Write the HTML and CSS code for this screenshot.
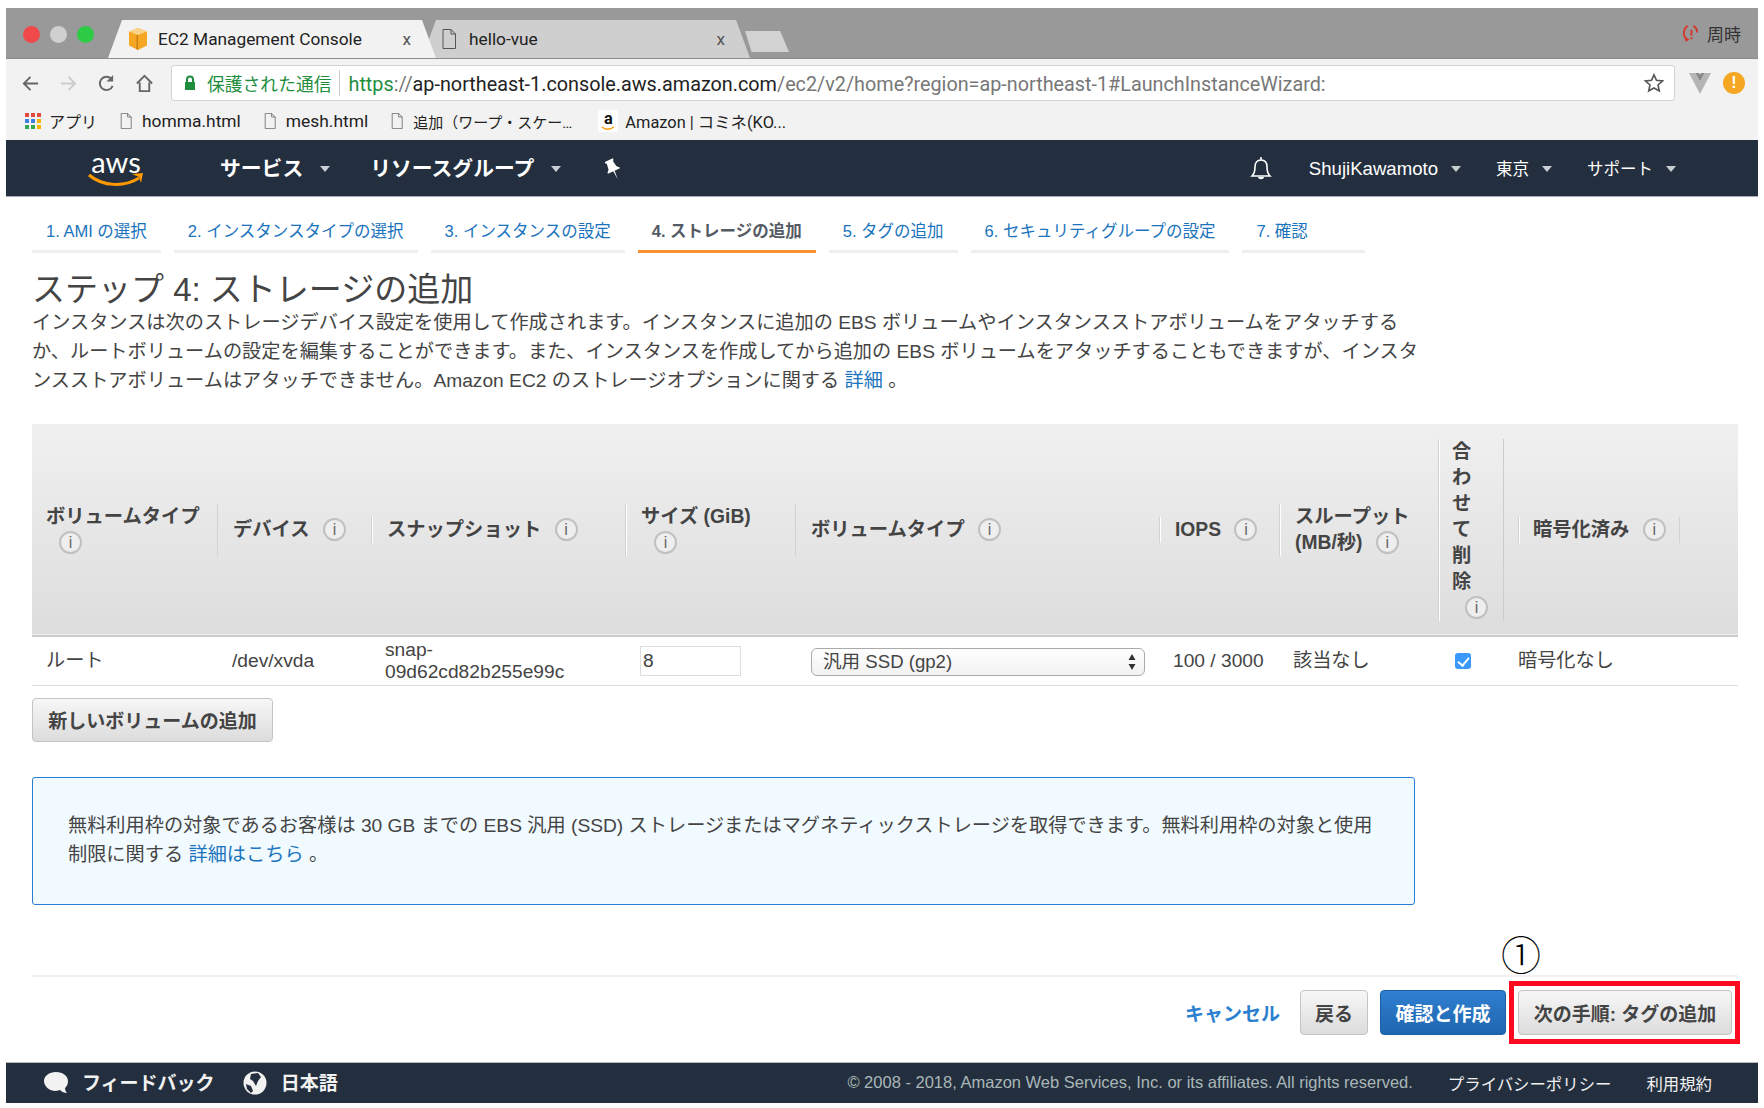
FILE: index.html
```html
<!DOCTYPE html>
<html lang="ja">

<head>
    <meta charset="UTF-8">
    <title>EC2 Management Console</title>
    <link rel="stylesheet" href="styles.css">
</head>

<body>
    <div class="screen">

        <div class="tabstrip">
            <div class="lights">
                <span class="light red"></span>
                <span class="light grey"></span>
                <span class="light green"></span>
            </div>
            <div class="tab active">
                <svg class="favicon" viewBox="0 0 20 22"><path fill="#f5a623" d="M10 0l9 3.5v14L10 22 1 17.500v-14z"/><path fill="#c77f12" d="M10 7v15l-1.500-.6V7z"/><path fill="#fbd38a" d="M10 0l9 3.500-9 3.500-9-3.500z"/></svg>
                <span class="tab-title">EC2 Management Console</span>
                <span class="tab-close">x</span>
            </div>
            <div class="tab other">
                <svg class="file-icon big" viewBox="0 0 14 20"><path fill="none" stroke="#555" d="M1 .5h8l4.500 4.500v14.500H1zM9 .5v4.500h4.500"/></svg>
                <span class="tab-title">hello-vue</span>
                <span class="tab-close">x</span>
            </div>
            <div class="newtab"></div>
            <div class="tab-user">
                <svg class="sync" viewBox="0 0 18 20"><path fill="none" stroke="#d8352a" stroke-width="2" d="M6 2C2 4 1 10 3 14l3 3M12 2c2 1 4 3 4 7"/><path fill="#d8352a" d="M9 6h2v6H9zM9 14h2v2H9zM4 19l-1-5 5 2z"/></svg>
                <span>周時</span>
            </div>
        </div>

        <div class="toolbar">
            <svg class="tool-icon first" viewBox="0 0 20 20"><path fill="none" stroke="#666" stroke-width="2" d="M18 10H3M10 3l-7 7 7 7"/></svg>
            <svg class="tool-icon" viewBox="0 0 20 20"><path fill="none" stroke="#ccc" stroke-width="2" d="M2 10h15M10 3l7 7-7 7"/></svg>
            <svg class="tool-icon" viewBox="0 0 20 20"><path fill="none" stroke="#666" stroke-width="2" d="M16.500 12.500A7 7 0 1 1 15 5"/><path fill="#666" d="M17 1v7h-7z"/></svg>
            <svg class="tool-icon" viewBox="0 0 20 20"><path fill="none" stroke="#666" stroke-width="2" d="M2 10l8-8 8 8M5 9v9h10V9"/></svg>
            <div class="address">
                <svg class="lock" viewBox="0 0 12 16"><path fill="#1e8e3e" d="M1 7h10v8H1z"/><path fill="none" stroke="#1e8e3e" stroke-width="2" d="M3 7V4.500a3 3 0 0 1 6 0V7"/></svg>
                <span class="secure">保護された通信</span>
                <span class="url"><span class="https">https</span><span class="dim">://</span>ap-northeast-1.console.aws.amazon.com<span class="dim">/ec2/v2/home?region=ap-northeast-1#LaunchInstanceWizard:</span></span>
                <svg class="star" viewBox="0 0 20 20"><path fill="none" stroke="#555" stroke-width="1.600" d="M10 1.800l2.500 5.500 6 .7-4.500 4 1.300 6L10 15l-5.300 3 1.300-6-4.500-4 6-.7z"/></svg>
            </div>
            <svg class="vue" viewBox="0 0 24 24"><path fill="#b5b5b5" d="M0 1h7l5 9 5-9h7L12 24z"/><path fill="#888" d="M7 1h4l1 2 1-2h4l-5 9z"/></svg>
            <div class="warn">!</div>
        </div>

        <div class="bookmarks">
            <div class="bm apps">
                <svg class="apps-icon" viewBox="0 0 17 17"><path fill="#e04a3f" d="M0 0h4v4H0zM6 0h4v4H6zM12 0h4v4h-4z"/><path fill="#3f7fe0" d="M0 6h4v4H0zM6 6h4v4H6z"/><path fill="#f4b400" d="M12 6h4v4h-4zM12 12h4v4h-4z"/><path fill="#34a853" d="M0 12h4v4H0zM6 12h4v4H6z"/></svg>
                アプリ
            </div>
            <div class="bm">
                <svg class="file-icon" viewBox="0 0 14 20"><path fill="none" stroke="#666" d="M1 .5h8l4.500 4.500v14.500H1zM9 .5v4.500h4.500"/></svg>
                homma.html
            </div>
            <div class="bm">
                <svg class="file-icon" viewBox="0 0 14 20"><path fill="none" stroke="#666" d="M1 .5h8l4.500 4.500v14.500H1zM9 .5v4.500h4.500"/></svg>
                mesh.html
            </div>
            <div class="bm">
                <svg class="file-icon" viewBox="0 0 14 20"><path fill="none" stroke="#666" d="M1 .5h8l4.500 4.500v14.500H1zM9 .5v4.500h4.500"/></svg>
                <span class="bm-long">追加（ワープ・スケー…</span>
            </div>
            <div class="bm amazon">
                <span class="amazon-icon">a<svg viewBox="0 0 14 5"><path fill="none" stroke="#f90" stroke-width="1.500" d="M1 1c3 3 8 3 12 0"/></svg></span>
                Amazon | コミネ(KO...
            </div>
        </div>

        <nav class="topnav">
            <div class="aws-logo">
                <span>aws</span>
                <svg viewBox="0 0 56 14"><path fill="none" stroke="#f90" stroke-width="3" d="M1 2c14 12 36 12 50 3"/><path fill="#f90" d="M44 1l11-1-2 10-2-6z"/></svg>
            </div>
            <a class="nav-main first">サービス<i class="caret"></i></a>
            <a class="nav-main">リソースグループ<i class="caret"></i></a>
            <svg class="pin" viewBox="0 0 18 20"><g transform="rotate(-25 9 10)"><path fill="#fff" d="M5 1h8v2h-1l1 6 2 2v1H3v-1l2-2 1-6H5zM8.300 12h1.400l-.7 8z"/></g></svg>
            <svg class="bell" viewBox="0 0 22 26"><path fill="none" stroke="#fff" stroke-width="1.600" d="M2 20c2-2 3-4 3-9 0-4 2-7 6-7s6 3 6 7c0 5 1 7 3 9zM11 1v3"/><path fill="#fff" d="M8 21h6c0 3-6 3-6 0z"/></svg>
            <a class="nav-side user">ShujiKawamoto<i class="caret"></i></a>
            <a class="nav-side">東京<i class="caret"></i></a>
            <a class="nav-side">サポート<i class="caret"></i></a>
        </nav>

        <ul class="steps">
            <li>1. AMI の選択</li>
            <li>2. インスタンスタイプの選択</li>
            <li>3. インスタンスの設定</li>
            <li class="current">4. ストレージの追加</li>
            <li>5. タグの追加</li>
            <li>6. セキュリティグループの設定</li>
            <li class="last">7. 確認</li>
        </ul>

        <main class="content">
            <h1>ステップ 4: ストレージの追加</h1>
            <p class="intro">インスタンスは次のストレージデバイス設定を使用して作成されます。インスタンスに追加の EBS ボリュームやインスタンスストアボリュームをアタッチする<br>か、ルートボリュームの設定を編集することができます。また、インスタンスを作成してから追加の EBS ボリュームをアタッチすることもできますが、インスタ<br>ンスストアボリュームはアタッチできません。Amazon EC2 のストレージオプションに関する <a href="#">詳細</a> 。</p>

            <table class="volumes">
                <colgroup>
                    <col class="c1"><col class="c2"><col class="c3"><col class="c4"><col class="c5"><col class="c6"><col class="c7"><col class="c8"><col class="c9">
                </colgroup>
                <thead>
                    <tr>
                        <th><div class="th-in first-col">ボリュームタイプ<br><span class="info wrapped">i</span></div></th>
                        <th><div class="th-in no-sep">デバイス <span class="info">i</span></div></th>
                        <th><div class="th-in">スナップショット <span class="info">i</span></div></th>
                        <th><div class="th-in sep-r">サイズ (GiB)<br><span class="info wrapped">i</span></div></th>
                        <th><div class="th-in no-sep">ボリュームタイプ <span class="info">i</span></div></th>
                        <th><div class="th-in">IOPS <span class="info">i</span></div></th>
                        <th><div class="th-in">スループット<br>(MB/秒) <span class="info">i</span></div></th>
                        <th><div class="th-in narrow"><div class="tate">合わせて削除<br><span class="info wrapped">i</span></div></div></th>
                        <th><div class="th-in enc">暗号化済み <span class="info">i</span></div></th>
                    </tr>
                </thead>
                <tbody>
                    <tr>
                        <td class="jp">ルート</td>
                        <td>/dev/xvda</td>
                        <td class="snap">snap-<br>09d62cd82b255e99c</td>
                        <td><input class="size" type="text" value="8"></td>
                        <td>
                            <div class="select">
                                <span>汎用 SSD (gp2)</span>
                                <svg viewBox="0 0 8 16"><path fill="#333" d="M4 0l3.500 6h-7zM4 16l3.500-6h-7z"/></svg>
                            </div>
                        </td>
                        <td>100 / 3000</td>
                        <td class="jp">該当なし</td>
                        <td class="check"><input type="checkbox" checked></td>
                        <td class="jp">暗号化なし</td>
                    </tr>
                </tbody>
            </table>

            <button class="btn add">新しいボリュームの追加</button>

            <div class="notice">
                無料利用枠の対象であるお客様は 30 GB までの EBS 汎用 (SSD) ストレージまたはマグネティックストレージを取得できます。無料利用枠の対象と使用<br>制限に関する <a href="#">詳細はこちら</a> 。
            </div>

            <div class="actions">
                <span class="marker">①</span>
                <a class="cancel" href="#">キャンセル</a>
                <button class="btn back">戻る</button>
                <button class="btn primary">確認と作成</button>
                <button class="btn next">次の手順: タグの追加</button>
                <div class="redbox"></div>
            </div>
        </main>

        <footer class="footer">
            <svg class="bubble" viewBox="0 0 26 24"><path fill="#f2f2f2" d="M13 1c7 0 12 4 12 9 0 3-1 5-3 7 0 2 1 4 2 5-3 0-5-1-7-3-1 0-3 1-4 1C6 20 1 15 1 10s5-9 12-9z"/></svg>
            <span class="fb">フィードバック</span>
            <svg class="globe" viewBox="0 0 24 24"><circle cx="12" cy="12" r="11.500" fill="#f2f2f2"/><path fill="#232f3e" d="M8 3l7-1 3 4-3 4-2 5-3-5-3-2zM3 13l5 2 2 5-2 2-4-4z"/></svg>
            <span class="lang">日本語</span>
            <span class="copy">© 2008 - 2018, Amazon Web Services, Inc. or its affiliates. All rights reserved.</span>
            <a class="foot-link">プライバシーポリシー</a>
            <a class="foot-link terms">利用規約</a>
        </footer>
    </div>
</body>

</html>
```

FILE: styles.css
```css
* {
    box-sizing: border-box;
}

body {
    margin: 0;
    background-color: #fff;
    color: #444;
    font-family: "Liberation Sans", "Noto Sans CJK JP", sans-serif;
    font-size: 19.200px;
}

a {
    color: #1a73bd;
    text-decoration: none;
}

.screen {
    width: 1752px;
    margin: 8px 0 0 6px;
}

/* browser chrome */

.tabstrip {
    height: 51px;
    background-color: #999;
    display: flex;
    align-items: flex-end;
    border-bottom: 1px solid #8c8c8c;
}

.lights {
    align-self: flex-start;
    display: flex;
    gap: 10px;
    margin: 18px 14px 0 17px;
}

.light {
    width: 17px;
    height: 17px;
    border-radius: 50%;
}

.red { background-color: #f0494a; }
.grey { background-color: #d0d0d0; }
.green { background-color: #2ecb47; }

.tab {
    position: relative;
    width: 328px;
    height: 38px;
    display: flex;
    align-items: center;
    font-family: Roboto, "Noto Sans CJK JP", sans-serif;
    font-size: 17.300px;
    color: #222;
    clip-path: polygon(0 100%, 14px 0, calc(100% - 14px) 0, 100% 100%);
}

.tab.active {
    background-color: #f2f2f2;
    padding-left: 20px;
    z-index: 1;
}

.tab.other {
    background-color: #cfcfcf;
    margin-left: -14px;
    padding-left: 20px;
}

.favicon {
    width: 20px;
    height: 22px;
    margin-right: 10px;
}

.tab-close {
    position: absolute;
    right: 25px;
    color: #555;
}

.file-icon {
    width: 12px;
    height: 16px;
    flex-shrink: 0;
}

.file-icon.big {
    width: 14px;
    height: 20px;
    margin-right: 13px;
}

.newtab {
    width: 44px;
    height: 21px;
    margin: 0 0 6px -5px;
    background-color: #d2d2d2;
    clip-path: polygon(0 0, 80% 0, 100% 100%, 15% 100%);
}

.tab-user {
    margin-left: auto;
    align-self: center;
    display: flex;
    align-items: center;
    gap: 8px;
    padding-right: 17px;
    font-size: 17px;
    color: #333;
}

.sync {
    width: 17px;
    height: 19px;
}

.toolbar {
    height: 48px;
    background-color: #f2f2f2;
    display: flex;
    align-items: center;
}

.tool-icon {
    width: 19px;
    height: 19px;
    margin-right: 19px;
}

.tool-icon.first {
    margin-left: 15px;
}

.address {
    width: 1504px;
    height: 36px;
    margin-left: -2px;
    background-color: #fff;
    border: 1px solid #d4d4d4;
    border-radius: 3px;
    display: flex;
    align-items: center;
    padding-left: 12px;
    font-family: Roboto, "Noto Sans CJK JP", sans-serif;
    font-size: 19.800px;
    color: #222;
    white-space: nowrap;
}

.lock {
    width: 12px;
    height: 16px;
    margin-right: 11px;
}

.secure {
    color: #1e8e3e;
    font-size: 17.800px;
    padding-right: 8px;
    margin-right: 8px;
    border-right: 1px solid #ccc;
}

.url {
    margin-top: 2px;
}

.https { color: #1e8e3e; }
.dim { color: #777; }

.star {
    width: 20px;
    height: 20px;
    margin-left: auto;
    margin-right: 10px;
}

.vue {
    width: 22px;
    height: 22px;
    margin-left: 14px;
}

.warn {
    width: 22px;
    height: 22px;
    margin-left: 12px;
    border-radius: 50%;
    background-color: #f5a623;
    color: #fff;
    font-weight: bold;
    font-size: 16px;
    line-height: 22px;
    text-align: center;
}

.bookmarks {
    height: 33px;
    background-color: #f2f2f2;
    display: flex;
    align-items: flex-start;
    padding-left: 19px;
    font-family: Roboto, "Noto Sans CJK JP", sans-serif;
    font-size: 17.400px;
    color: #222;
}

.bm {
    display: flex;
    align-items: center;
    gap: 10px;
    height: 28px;
    margin-right: 23px;
    white-space: nowrap;
}

.bm.apps {
    gap: 7px;
    font-size: 16px;
}

.apps-icon {
    width: 17px;
    height: 17px;
}

.bm-long {
    font-size: 15px;
}

.bm.amazon {
    gap: 7px;
    margin-left: 3px;
    font-size: 16.400px;
}

.amazon-icon {
    position: relative;
    width: 20px;
    height: 22px;
    background-color: #fff;
    border-radius: 3px;
    text-align: center;
    font-weight: bold;
    line-height: 17px;
    color: #111;
}

.amazon-icon svg {
    position: absolute;
    left: 3px;
    bottom: 1px;
    width: 14px;
    height: 5px;
}

/* aws header */

.topnav {
    height: 57px;
    padding: 2px 82px 0 0;
    background-color: #232f3e;
    border-bottom: 1px solid #aab;
    display: flex;
    align-items: center;
    color: #fff;
}

.aws-logo {
    width: 56px;
    margin-left: 82px;
    display: flex;
    flex-direction: column;
    align-items: center;
    color: #fff;
    font-family: Lato, sans-serif;
    font-size: 29px;
    line-height: 22px;
}

.aws-logo svg {
    width: 56px;
    height: 14px;
}

.nav-main,
.nav-side {
    color: #fff;
    display: flex;
    align-items: center;
    white-space: nowrap;
    line-height: 26px;
}

.nav-main {
    font-size: 20.800px;
    font-weight: bold;
    margin-right: 40px;
}

.nav-main.first {
    margin-left: 76px;
}

.nav-side {
    font-size: 16.500px;
    margin-right: 35px;
}

.nav-side.user {
    font-size: 18.600px;
}

.nav-side:last-child {
    margin-right: 0;
}

.caret {
    width: 0;
    height: 0;
    margin-left: 13px;
    border-left: 5px solid transparent;
    border-right: 5px solid transparent;
    border-top: 6px solid #c9ced3;
}

.nav-main .caret {
    margin-left: 17px;
}

.pin {
    width: 20px;
    height: 22px;
    margin-left: 2px;
}

.bell {
    width: 22px;
    height: 26px;
    margin-left: auto;
    margin-right: 37px;
}

/* wizard steps */

.steps {
    list-style: none;
    margin: 0;
    padding: 0 0 0 26px;
    display: flex;
    gap: 13px;
    height: 56px;
}

.steps li {
    padding: 0 14px;
    height: 56px;
    line-height: 68px;
    border-bottom: 3px solid #eee;
    color: #1a73bd;
    font-size: 16.500px;
    white-space: nowrap;
}

.steps li.current {
    color: #545b64;
    font-weight: bold;
    border-bottom-color: #f7922e;
}

.steps li.last {
    min-width: 123px;
}

/* page body */

.content {
    padding: 0 20px 0 26px;
}

h1 {
    margin: 19px 0 0;
    font-size: 33px;
    font-weight: normal;
    line-height: 36px;
    color: #444;
}

.intro {
    margin: 0;
    line-height: 29px;
    white-space: nowrap;
}

.volumes {
    width: 1706px;
    margin-top: 29px;
    table-layout: fixed;
    border-collapse: collapse;
}

.c1 { width: 186px; }
.c2 { width: 153px; }
.c3 { width: 254px; }
.c4 { width: 171px; }
.c5 { width: 363px; }
.c6 { width: 120px; }
.c7 { width: 159px; }
.c8 { width: 66px; }
.c9 { width: 234px; }

.volumes thead tr {
    height: 212px;
    background: linear-gradient(#f0f0f0, #dddddd);
    border-bottom: 2px solid #ccc;
}

.volumes th {
    padding: 0;
    text-align: left;
    font-size: 19.300px;
    font-weight: bold;
    line-height: 26px;
}

.th-in {
    padding-left: 15px;
    border-left: 1px solid #d2d2d2;
    box-shadow: inset 1px 0 0 #fff;
}

.th-in.first-col {
    padding-left: 14px;
    border-left: none;
    border-right: 1px solid #d2d2d2;
    box-shadow: none;
}

.th-in.no-sep {
    border-left: none;
    box-shadow: none;
}

.th-in.sep-r {
    border-right: 1px solid #d2d2d2;
}

.th-in.narrow {
    padding-left: 13px;
    border-right: 1px solid #ccc;
}

.tate {
    width: 20px;
}

.th-in.enc {
    margin-left: 14px;
    padding-left: 14px;
    border-right: 1px solid #d2d2d2;
    margin-right: 58px;
}

.info {
    display: inline-block;
    width: 23px;
    height: 23px;
    margin-left: 8px;
    border: 2px solid #c0c0c0;
    border-radius: 50%;
    background-color: #eee;
    color: #666;
    font-size: 16px;
    font-weight: normal;
    line-height: 19px;
    text-align: center;
    vertical-align: 1px;
}

.info.wrapped {
    margin-left: 13px;
}

.volumes td {
    height: 49px;
    padding: 0 14px;
    border-bottom: 1px solid #ddd;
}

.volumes td.jp {
    padding-bottom: 4px;
}

.snap {
    line-height: 22px;
}

.size {
    display: block;
    width: 101px;
    height: 30px;
    margin-left: 1px;
    padding: 0 2px;
    border: 1px solid #ddd;
    font-family: inherit;
    font-size: 19.200px;
    color: #444;
}

.select {
    width: 334px;
    height: 28px;
    margin: 2px 0 0 1px;
    padding: 0 8px 0 11px;
    border: 1px solid #aaa;
    border-radius: 6px;
    background: linear-gradient(#fff, #f2f2f2);
    display: flex;
    align-items: center;
    justify-content: space-between;
    font-size: 18.600px;
    line-height: 26px;
}

.select svg {
    width: 8px;
    height: 16px;
}

.check input {
    appearance: none;
    position: relative;
    display: block;
    width: 16px;
    height: 16px;
    margin: 0 0 0 3px;
    border-radius: 3px;
    background-color: #3b99fc;
}

.check input::after {
    content: "";
    position: absolute;
    left: 5px;
    top: 2px;
    width: 5px;
    height: 9px;
    border-right: 2px solid #fff;
    border-bottom: 2px solid #fff;
    transform: rotate(40deg);
}

.btn {
    border: 1px solid #c4c4c4;
    border-radius: 4px;
    background: linear-gradient(#f7f7f7, #dcdcdc);
    color: #444;
    font-family: inherit;
    font-size: 19px;
    font-weight: bold;
    height: 45px;
    padding: 0;
}

.btn.add {
    display: block;
    width: 241px;
    height: 44px;
    margin-top: 12px;
}

.notice {
    width: 1383px;
    height: 128px;
    margin-top: 35px;
    padding: 33px 35px 0;
    border: 1px solid #2b7cd3;
    border-radius: 3px;
    background-color: #f1faff;
    line-height: 29px;
    white-space: nowrap;
}

.actions {
    position: relative;
    margin-top: 70px;
    padding: 13px 6px 27px 0;
    border-top: 2px solid #f0f0f0;
    display: flex;
    justify-content: flex-end;
    align-items: center;
}

.cancel {
    margin-right: 20px;
    color: #2b80d0;
    font-size: 19px;
    font-weight: bold;
}

.btn.back {
    width: 68px;
    margin-right: 12px;
}

.btn.primary {
    width: 126px;
    margin-right: 12px;
    background: linear-gradient(#2f7fd0, #1f66b0);
    border-color: #1a5ea5;
    color: #fff;
}

.btn.next {
    width: 214px;
}

/* annotation drawn over the screenshot */

.redbox {
    position: absolute;
    top: 4px;
    right: -2px;
    width: 231px;
    height: 63px;
    border: 5px solid #fb0a20;
}

.marker {
    position: absolute;
    top: -45px;
    right: 197px;
    font-size: 40px;
    font-weight: 300;
    line-height: 48px;
    color: #000;
}

/* footer */

.footer {
    height: 41px;
    background-color: #232f3e;
    border-top: 1px solid #bbb;
    display: flex;
    align-items: center;
    color: #f2f2f2;
}

.bubble {
    width: 26px;
    height: 24px;
    margin-left: 37px;
}

.fb,
.lang {
    font-size: 19px;
    font-weight: bold;
    padding-bottom: 3px;
}

.fb {
    margin-left: 13px;
}

.globe {
    width: 24px;
    height: 24px;
    margin-left: 28px;
}

.lang {
    margin-left: 14px;
}

.copy {
    margin-left: auto;
    color: #aab7b8;
    font-size: 16.500px;
}

.foot-link {
    margin-left: 35px;
    color: #f2f2f2;
    font-size: 16.400px;
}

.foot-link.terms {
    margin-right: 46px;
}
```
